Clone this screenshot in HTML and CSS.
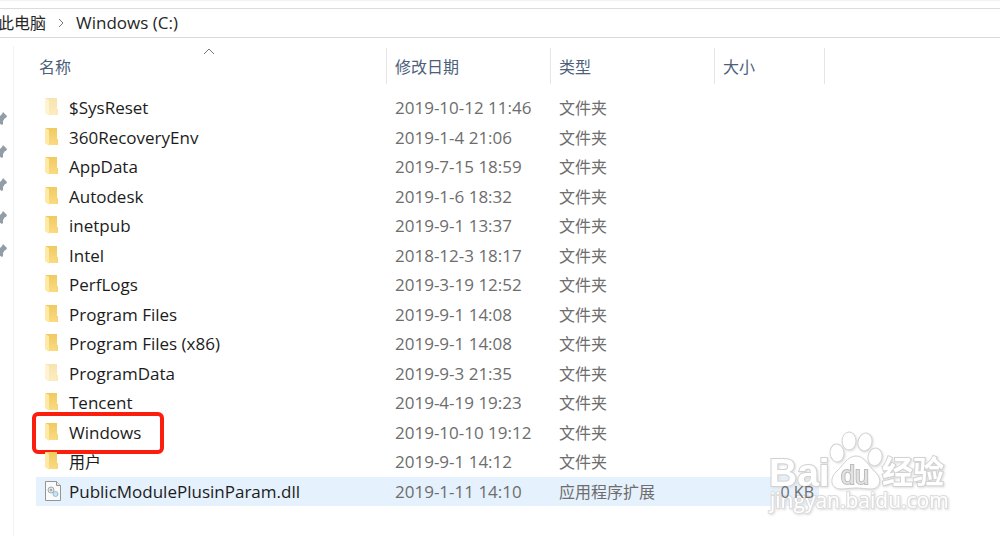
FILE: index.html
```html
<!DOCTYPE html>
<html lang="zh-CN">
<head>
    <meta charset="UTF-8">
    <meta name="viewport" content="width=device-width, initial-scale=1.0">
    <title>Windows (C:)</title>
    <link rel="stylesheet" href="styles.css">
</head>

<body>
    <!-- Icons -->
    <svg class="defs" width="0" height="0" aria-hidden="true">
        <defs>
            <linearGradient id="gold" x1="0" y1="0" x2="0" y2="1">
                <stop offset="0" stop-color="#f0ca60"/>
                <stop offset="1" stop-color="#fadb83"/>
            </linearGradient>
        </defs>
        <symbol id="folder" viewBox="0 0 14 20">
            <path d="M1 1h11v11l1 1v5H4L1 16z" fill="url(#gold)"/>
            <path d="M0 1l4 2v16l-4-3z" fill="#ffe9a6"/>
            <path d="M11 12h2v6h-2z" fill="#f8d577"/>
        </symbol>
        <symbol id="pin" viewBox="0 0 12 14">
            <path d="M8 0l4 4-1 2h-1l-2 3v3l-1 1-3-2-4 3 2-5L0 6l4-1 3-3z" fill="#929da6"/>
        </symbol>
        <symbol id="dll" viewBox="0 0 16 20">
            <path d="M.5.5h11l4 4v15H.5z" fill="#fafafa" stroke="#949494"/>
            <path d="M11.500.5v4h4" fill="#e8e8e8" stroke="#949494"/>
            <circle cx="6" cy="9" r="3" fill="#dfe4e7" stroke="#a3abb0"/>
            <circle cx="6" cy="9" r="1" fill="#8d969b"/>
            <circle cx="10.500" cy="13" r="2.500" fill="#c4e3f3" stroke="#9bbccd"/>
        </symbol>
    </svg>

    <nav class="path">
        <a class="cn" href="#">此电脑</a>
        <svg class="arrow" viewBox="0 0 8 10"><path d="M2 1l4 4-4 4"/></svg>
        <a href="#">Windows (C:)</a>
    </nav>

    <div class="main">
        <aside class="quick">
            <svg class="pin"><use href="#pin"/></svg>
            <svg class="pin"><use href="#pin"/></svg>
            <svg class="pin"><use href="#pin"/></svg>
            <svg class="pin"><use href="#pin"/></svg>
            <svg class="pin"><use href="#pin"/></svg>
        </aside>

        <div class="content">
            <table class="files">
                <thead>
                    <tr>
                        <th class="name"><button>名称</button><svg class="sort" viewBox="0 0 12 7"><path d="M1 6l5-5 5 5"/></svg></th>
                        <th class="date"><button>修改日期</button></th>
                        <th class="type"><button>类型</button></th>
                        <th class="size"><button>大小</button></th>
                    </tr>
                </thead>
                <tbody>
                    <tr class="hidden-item"><td><svg class="icon"><use href="#folder"/></svg>$SysReset</td><td>2019-10-12 11:46</td><td>文件夹</td><td></td></tr>
                    <tr><td><svg class="icon"><use href="#folder"/></svg>360RecoveryEnv</td><td>2019-1-4 21:06</td><td>文件夹</td><td></td></tr>
                    <tr><td><svg class="icon"><use href="#folder"/></svg>AppData</td><td>2019-7-15 18:59</td><td>文件夹</td><td></td></tr>
                    <tr><td><svg class="icon"><use href="#folder"/></svg>Autodesk</td><td>2019-1-6 18:32</td><td>文件夹</td><td></td></tr>
                    <tr><td><svg class="icon"><use href="#folder"/></svg>inetpub</td><td>2019-9-1 13:37</td><td>文件夹</td><td></td></tr>
                    <tr><td><svg class="icon"><use href="#folder"/></svg>Intel</td><td>2018-12-3 18:17</td><td>文件夹</td><td></td></tr>
                    <tr><td><svg class="icon"><use href="#folder"/></svg>PerfLogs</td><td>2019-3-19 12:52</td><td>文件夹</td><td></td></tr>
                    <tr><td><svg class="icon"><use href="#folder"/></svg>Program Files</td><td>2019-9-1 14:08</td><td>文件夹</td><td></td></tr>
                    <tr><td><svg class="icon"><use href="#folder"/></svg>Program Files (x86)</td><td>2019-9-1 14:08</td><td>文件夹</td><td></td></tr>
                    <tr class="hidden-item"><td><svg class="icon"><use href="#folder"/></svg>ProgramData</td><td>2019-9-3 21:35</td><td>文件夹</td><td></td></tr>
                    <tr><td><svg class="icon"><use href="#folder"/></svg>Tencent</td><td>2019-4-19 19:23</td><td>文件夹</td><td></td></tr>
                    <tr><td><svg class="icon"><use href="#folder"/></svg>Windows<span class="frame"></span></td><td>2019-10-10 19:12</td><td>文件夹</td><td></td></tr>
                    <tr><td><svg class="icon"><use href="#folder"/></svg><span class="cn">用户</span></td><td>2019-9-1 14:12</td><td>文件夹</td><td></td></tr>
                    <tr class="hover"><td><svg class="icon file"><use href="#dll"/></svg>PublicModulePlusinParam.dll</td><td>2019-1-11 14:10</td><td>应用程序扩展</td><td><span class="kb">0 KB</span></td></tr>
                </tbody>
            </table>
        </div>
    </div>

    <!-- Watermark -->
    <svg class="watermark" viewBox="0 0 190 90">
        <text class="logo" x="1" y="58">Bai</text>
        <g class="paw">
            <ellipse cx="81" cy="13" rx="7" ry="9"/>
            <ellipse cx="97" cy="14" rx="7" ry="9" transform="rotate(14 97 14)"/>
            <ellipse cx="69" cy="25" rx="7" ry="9" transform="rotate(-8 69 25)"/>
            <ellipse cx="107" cy="29" rx="7" ry="9" transform="rotate(10 107 29)"/>
            <path d="M88 28c9 0 13 11 19 16 8 7 5 17-4 17-6 0-9-1-15-1s-10 1-15 1c-10 0-12-10-5-17 7-6 11-16 20-16z"/>
        </g>
        <text class="du" x="73" y="56">du</text>
        <text class="jingyan" x="114" y="55">经验</text>
        <text class="site" x="2" y="80">jingyan.baidu.com</text>
    </svg>
</body>
</html>
```

FILE: styles.css
```css
body {
    margin: 0;
    min-height: 100vh;
    display: flex;
    flex-direction: column;
    position: relative;
    overflow: hidden;
    background-color: #fff;
    color: #1c1c1c;
    font-family: "Open Sans", "Noto Sans CJK SC", sans-serif;
    font-size: 17px;
    box-sizing: border-box;
    border-top: 1px solid #f3f3f3;
}
.defs {
    position: absolute;
}
.path {
    display: flex;
    align-items: center;
    gap: 11px;
    height: 28px;
    margin: 7px 0 8px -2px;
    border-top: 1px solid #dcdcdc;
    border-bottom: 1px solid #d9d9d9;
    line-height: 24px;
}
.path a {
    color: #262626;
    text-decoration: none;
}
.arrow {
    width: 8px;
    height: 10px;
}
.arrow path, .sort path {
    fill: none;
    stroke: #777;
}
.main {
    display: flex;
    flex: 1;
}
.quick {
    display: flex;
    flex-direction: column;
    gap: 19px;
    width: 13px;
    padding-top: 66px;
    border-right: 1px solid #f3f3f3;
}
.pin {
    width: 12px;
    height: 14px;
    margin-left: -5px;
}
.content {
    flex: 1;
    padding: 2px 22px 0;
}
.files {
    width: 100%;
    max-width: 789px;
    table-layout: fixed;
    border-collapse: separate;
    border-spacing: 0;
}
.files th {
    position: relative;
    height: 36px;
    padding: 0;
    border-right: 1px solid #e5e5e5;
    text-align: left;
    font-weight: normal;
}
.files th.date, .files th.type {
    width: 163px;
}
.files th.size {
    width: 109px;
}
.files th button {
    padding: 0 8px;
    border: none;
    background: none;
    color: #4c607a;
    font-family: inherit;
    font-size: 16px;
    cursor: pointer;
}
.files th.name button {
    padding: 0 3px;
}
.sort {
    position: absolute;
    top: 0;
    left: 167px;
    width: 12px;
    height: 7px;
}
.files tbody::before {
    content: "";
    display: block;
    height: 9px;
}
.files td {
    height: 30px;
    padding: 0 0 0 8px;
    line-height: 24px;
    color: #6d6d6d;
    white-space: nowrap;
}
.files tr:nth-child(even) td {
    height: 29px;
}
.files td:first-child {
    position: relative;
    color: #1c1c1c;
}
.files td:nth-child(3), .cn {
    font-size: 16px;
}
.files td:last-child {
    padding-right: 5px;
    border-right: 6px solid transparent;
    background-clip: padding-box;
    text-align: right;
    font-size: 16px;
}
.files .hover td {
    height: 30px;
    background-color: #e5f1fc;
}
.kb {
    position: relative;
    z-index: 2;
}
.icon {
    width: 14px;
    height: 20px;
    margin: 0 10px 0 1px;
    vertical-align: -3px;
}
.icon.file {
    width: 16px;
    margin-right: 8px;
    vertical-align: -3px;
}
.hidden-item .icon {
    opacity: 0.5;
}
.frame {
    position: absolute;
    top: -6px;
    left: -4px;
    width: 124px;
    height: 34px;
    border: 4px solid #fb1e0f;
    border-radius: 6px;
}
.watermark {
    position: absolute;
    z-index: 1;
    right: 42px;
    bottom: 18px;
    width: 190px;
    height: 90px;
    overflow: visible;
    filter: drop-shadow(1px 1px 1px #ddd);
}
.watermark text, .paw {
    fill: #fff;
    stroke: #d2d2d2;
    font-family: "Liberation Sans", "Noto Sans CJK SC", sans-serif;
}
.watermark text {
    paint-order: stroke;
    stroke-width: 2px;
}
.watermark .logo {
    font-size: 39px;
    font-weight: bold;
}
.watermark .du {
    font-size: 25px;
    fill: #e2e2e2;
    stroke: #bbb;
}
.watermark .jingyan {
    font-size: 31px;
    font-weight: bold;
}
.watermark .site {
    font-family: "Open Sans", sans-serif;
    font-size: 21px;
    stroke: #ddd;
}
```
